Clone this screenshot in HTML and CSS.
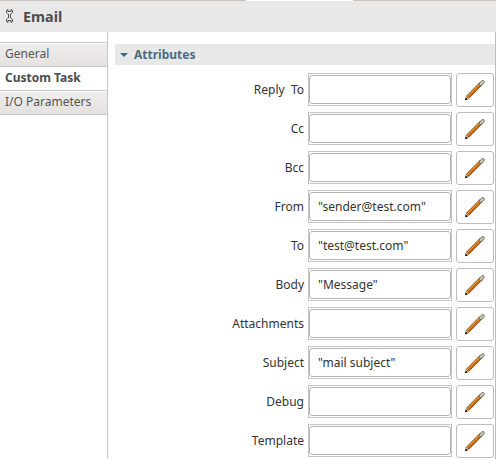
FILE: index.html
```html
<!DOCTYPE html>
<html lang="en">
<head>
  <meta charset="utf-8">
  <title>Email</title>
  <link rel="stylesheet" href="styles.css">
</head>
<body>
  <svg class="defs" width="0" height="0">
    <symbol id="pencil" viewBox="0 0 22 22">
      <path d="M3.2 18.6 L17 4.6" stroke="#6e481c" stroke-width="3.8"/>
      <path d="M3.2 18 L16.4 4.6" stroke="#f0a43a" stroke-width="1.6"/>
      <path d="M4 18.6 L17 5.6" stroke="#d2600c" stroke-width="1.6"/>
      <path d="M17 4.8 L18.8 3" stroke="#6a6a6a" stroke-width="3.8" stroke-linecap="round"/>
      <path d="M16.8 5 L18.8 3" stroke="#c9cfae" stroke-width="2.2" stroke-linecap="round"/>
      <path d="M1.2 21 L2 17.4 L4.8 20 Z" fill="#e9c58e"/>
      <path d="M1 21.2 L1.6 18.2 L4 20.4 Z" fill="#111"/>
    </symbol>
  </svg>

  <div class="tab-edge"><div class="tab-active"></div></div>
  <div class="header">
    <svg class="tool-icon" width="10" height="16" viewBox="0 0 10 16">
      <path d="M3 1.5 L1.5 2.5 V4.5 L3.5 6 V10 L1.5 11.5 V13.5 L3 14.5 V12.5 H6 V14.5 L7.5 13.5 V11.5 L5.5 10 V6 L7.5 4.5 V2.5 L6 1.5 V3.5 H3 Z" fill="#f4f4f4" stroke="#4a4a4a"/>
    </svg>
    <h1>Email</h1>
  </div>

  <div class="main">
    <div class="sidebar">
      <div class="side-tab">General</div>
      <div class="side-tab selected">Custom Task</div>
      <div class="side-tab">I/O Parameters</div>
    </div>

    <div class="content">
      <div class="section-title"><span class="arrow"></span>Attributes</div>
      <div class="fields">
        <div class="row"><label for="replyTo">Reply&nbsp; To</label><div class="input-box"><input type="text" id="replyTo"></div><button class="edit-btn"><svg><use href="#pencil"/></svg></button></div>
        <div class="row"><label for="cc">Cc</label><div class="input-box"><input type="text" id="cc"></div><button class="edit-btn"><svg><use href="#pencil"/></svg></button></div>
        <div class="row"><label for="bcc">Bcc</label><div class="input-box"><input type="text" id="bcc"></div><button class="edit-btn"><svg><use href="#pencil"/></svg></button></div>
        <div class="row"><label for="from">From</label><div class="input-box"><input type="text" id="from" value="&quot;sender@test.com&quot;"></div><button class="edit-btn"><svg><use href="#pencil"/></svg></button></div>
        <div class="row"><label for="to">To</label><div class="input-box"><input type="text" id="to" value="&quot;test@test.com&quot;"></div><button class="edit-btn"><svg><use href="#pencil"/></svg></button></div>
        <div class="row"><label for="body">Body</label><div class="input-box"><input type="text" id="body" value="&quot;Message&quot;"></div><button class="edit-btn"><svg><use href="#pencil"/></svg></button></div>
        <div class="row"><label for="attachments">Attachments</label><div class="input-box"><input type="text" id="attachments"></div><button class="edit-btn"><svg><use href="#pencil"/></svg></button></div>
        <div class="row"><label for="subject">Subject</label><div class="input-box"><input type="text" id="subject" value="&quot;mail subject&quot;"></div><button class="edit-btn"><svg><use href="#pencil"/></svg></button></div>
        <div class="row"><label for="debug">Debug</label><div class="input-box"><input type="text" id="debug"></div><button class="edit-btn"><svg><use href="#pencil"/></svg></button></div>
        <div class="row"><label for="template">Template</label><div class="input-box"><input type="text" id="template"></div><button class="edit-btn"><svg><use href="#pencil"/></svg></button></div>
      </div>
    </div>
  </div>
</body>
</html>
```

FILE: styles.css
```css
* {
  box-sizing: border-box;
}

body {
  margin: 0;
  width: 496px;
  height: 459px;
  overflow: hidden;
  display: flex;
  flex-direction: column;
  background: #fff;
  color: #333;
  font-family: "Noto Sans", sans-serif;
  font-size: 12px;
}

.defs {
  display: none;
}

.tab-edge {
  flex: none;
  height: 1px;
  background: #c9c3ba;
}

.tab-active {
  width: 107px;
  height: 1px;
  margin-left: 246px;
  background: #fff;
}

.header {
  flex: none;
  height: 31px;
  display: flex;
  align-items: flex-start;
  gap: 8px;
  padding: 6px 0 0 5px;
  background: #e8e8e8;
}

.tool-icon {
  margin-top: 1px;
}

h1 {
  margin: 0;
  font-size: 14.4px;
  line-height: 20px;
  color: #4d4d4d;
}

.main {
  flex: 1;
  min-height: 0;
  display: flex;
  border-right: 1px solid #bdbdbd;
}

.sidebar {
  width: 108px;
  padding-top: 10px;
  border-right: 1px solid #cbc7c4;
}

.side-tab {
  height: 25px;
  padding-left: 5px;
  line-height: 22px;
  white-space: nowrap;
  color: #555;
  background: linear-gradient(#f1efee, #e3e0de);
  border-top: 1px solid #cbc7c4;
  border-bottom: 1px solid #cbc7c4;
  box-shadow: inset 0 1px #fff;
}

.side-tab.selected {
  height: 23px;
  background: #fff;
  border: none;
  font-weight: bold;
  color: #4d4d4d;
}

.content {
  flex: 1;
  padding: 12px 0 0 7px;
}

.section-title {
  height: 21px;
  display: flex;
  align-items: center;
  padding-left: 5px;
  background: #e8e8e8;
  color: #4d6b80;
  font-weight: bold;
  line-height: 20px;
}

.arrow {
  margin-right: 6px;
  border: 4px solid transparent;
  border-top-color: #3f6a8a;
  border-bottom: none;
}

.fields {
  display: flex;
  flex-direction: column;
  gap: 5px;
  padding: 8px 1px 0 0;
}

.row {
  height: 34px;
  display: flex;
  align-items: flex-start;
}

.row label {
  flex: 1;
  padding-right: 4px;
  text-align: right;
  line-height: 34px;
  white-space: nowrap;
}

.input-box {
  width: 144px;
  height: 33px;
  padding: 1px 0;
  border: 1px solid #c4c4c4;
}

.input-box input {
  display: block;
  width: 100%;
  height: 29px;
  padding: 0 8px;
  border: 1px solid #b4b4b4;
  border-radius: 3px;
  background: #fff;
  color: #333;
  font: inherit;
}

.edit-btn {
  width: 38px;
  height: 34px;
  margin-left: 4px;
  padding: 0;
  display: flex;
  align-items: center;
  justify-content: center;
  background: #fff;
  border: 1px solid #bdbdbd;
  border-radius: 3px;
}

.edit-btn svg {
  width: 22px;
  height: 22px;
}
```
